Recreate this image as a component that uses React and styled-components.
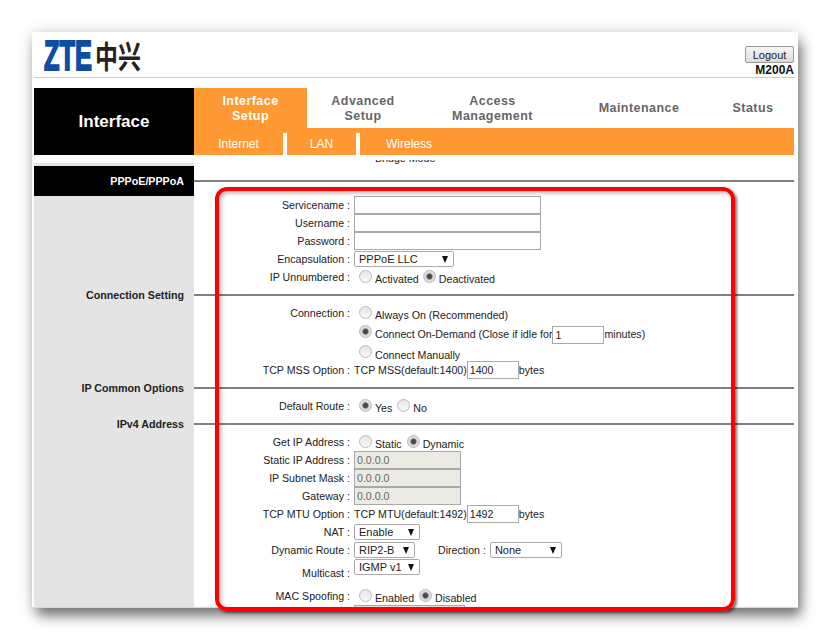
import styled, { createGlobalStyle } from 'styled-components';

const GlobalStyle = createGlobalStyle`
  html, body { margin: 0; padding: 0; background: #fff; }
  body { width: 830px; height: 641px; overflow: hidden; font-family: "Liberation Sans", Arial, sans-serif; }
`;

const Page = styled.div`
  position: relative;
  width: 830px;
  height: 641px;
  padding: 32px 32px 33px 32px;
  box-sizing: border-box;
  overflow: hidden;
`;

const Window = styled.div`
  width: 766px;
  height: 576px;
  box-sizing: border-box;
  padding: 0 4px 2px 2px;
  background: #fff;
  border-bottom: 1px solid #cfd8de;
  box-shadow: 0 0 14px rgba(0, 0, 0, 0.16), 4px 9px 12px -1px rgba(0, 0, 0, 0.5);
  overflow: hidden;
  font-size: 10.65px;
  color: #222;
`;

const Header = styled.header`
  height: 46px;
  box-sizing: border-box;
  border-bottom: 1px solid #ccc;
  display: flex;
  justify-content: space-between;
`;

const Logo = styled.svg`
  width: 120px;
  height: 44px;
  margin-left: 8px;
  flex: none;
`;

const HeaderSide = styled.div`
  display: flex;
  flex-direction: column;
  align-items: flex-end;
  padding-top: 14px;
`;

const LogoutButton = styled.button`
  width: 49px;
  height: 18px;
  padding: 0;
  border: 1px solid #999;
  border-radius: 2px;
  background: linear-gradient(#f6f6f6, #dcdcdc);
  font: 11px "Liberation Sans", Arial, sans-serif;
  color: #222;
`;

const Model = styled.div`
  font-size: 12px;
  font-weight: bold;
  line-height: 14px;
  color: #111;
`;

const Nav = styled.nav`
  margin-top: 10px;
  height: 67px;
  display: grid;
  grid-template-columns: 160px 1fr;
`;

const NavTitle = styled.div`
  background: #000;
  color: #fff;
  font-size: 17px;
  font-weight: bold;
  display: flex;
  align-items: center;
  justify-content: center;
  padding-top: 1px;
`;

const NavRight = styled.div`
  display: flex;
  flex-direction: column;
`;

const Tabs = styled.div`
  height: 40px;
  display: grid;
  grid-template-columns: 113px 112px 147px 146px 82px;
`;

const Tab = styled.div`
  background: ${p => (p.$active ? '#ff9933' : '#fff')};
  color: ${p => (p.$active ? '#fff' : '#666')};
  font-size: 12.5px;
  font-weight: bold;
  line-height: 15px;
  letter-spacing: 0.45px;
  text-align: center;
  display: flex;
  align-items: center;
  justify-content: center;
  padding-top: 1px;
  box-sizing: border-box;
`;

const SubBar = styled.div`
  height: 27px;
  background: #ff9933;
  display: flex;
  align-items: stretch;
`;

const SubItem = styled.div`
  width: ${p => p.$w}px;
  box-sizing: border-box;
  margin-top: 5px;
  border-right: ${p => (p.$sep ? '4px solid #fff' : 'none')};
  color: #fff;
  font-size: 12px;
  display: flex;
  align-items: center;
  justify-content: center;
`;

const CutRow = styled.div`
  height: 11px;
  display: grid;
  grid-template-columns: 160px 1fr;
`;

const CutSide = styled.div`
  margin-top: 8px;
  background: #e4e4e4;
`;

const CutText = styled.div`
  margin: 5px 0 0 181px;
  height: 5px;
  overflow: hidden;
  display: flex;
  align-items: flex-end;
  white-space: nowrap;
  line-height: 13px;
`;

const Head = styled.div`
  display: grid;
  grid-template-columns: 160px 1fr;
  height: ${p => p.$h || 18}px;
`;

const HeadTitle = styled.div`
  background: ${p => (p.$dark ? '#000' : '#e4e4e4')};
  color: ${p => (p.$dark ? '#fff' : '#222')};
  font-size: 10.7px;
  font-weight: bold;
  display: flex;
  align-items: center;
  justify-content: flex-end;
  padding-right: 10px;
`;

const HeadLine = styled.div`
  display: flex;
  align-items: center;
  &::before {
    content: '';
    flex: 1;
    height: 2px;
    background: #808080;
  }
`;

const Section = styled.section`
  display: grid;
  grid-template-columns: 160px 1fr;
`;

const Side = styled.div`
  background: #e4e4e4;
`;

const Rows = styled.div`
  display: flex;
  flex-direction: column;
`;

const Row = styled.div`
  display: flex;
  height: ${p => p.$h || 18}px;
  align-items: ${p => p.$align || 'center'};
  margin-top: ${p => p.$top || 0}px;
`;

const Label = styled.label`
  width: 160px;
  flex: none;
  text-align: right;
  padding-right: 4px;
  box-sizing: border-box;
  white-space: nowrap;
  position: relative;
  top: ${p => p.$shift || 0}px;
`;

const Value = styled.div`
  display: flex;
  align-items: center;
  white-space: nowrap;
  height: 100%;
`;

const TextInput = styled.input`
  width: ${p => p.$w}px;
  height: 18px;
  margin: 0;
  padding: 0 2px;
  box-sizing: border-box;
  border: 1px solid #a9a9a9;
  border-radius: 0;
  background: ${p => (p.disabled ? '#ebebe4' : '#fff')};
  font: 10.65px "Liberation Sans", Arial, sans-serif;
  color: ${p => (p.disabled ? '#666' : '#222')};
  outline: none;
  position: relative;
  top: ${p => p.$shift || 0}px;
`;

const SelectBox = styled.div`
  width: ${p => p.$w}px;
  height: 16px;
  box-sizing: border-box;
  border: 1px solid #a9a9a9;
  border-radius: 2px;
  padding: 0 5px 0 4px;
  display: flex;
  align-items: center;
  justify-content: space-between;
  background: #fff;
  font-size: 11px;
  margin-top: ${p => p.$top || 0}px;
  &::after {
    content: '';
    border-left: 3.5px solid transparent;
    border-right: 3.5px solid transparent;
    border-top: 7px solid #111;
  }
`;

const Radio = styled.input.attrs({ type: 'radio' })`
  appearance: none;
  width: 13px;
  height: 13px;
  margin: 0 3px 0 5px;
  border: 1px solid #bbb;
  border-radius: 50%;
  background: ${p =>
    p.checked
      ? 'radial-gradient(circle, #444 0, #555 2.5px, #d8d8d8 3.5px, #e8e8e8 100%)'
      : 'linear-gradient(#e6e6e6, #f8f8f8)'};
  position: relative;
  top: -1px;
  flex: none;
`;

const OptionText = styled.span`
  position: relative;
  top: ${p => p.$shift ?? 2}px;
  margin-right: ${p => p.$gap || 0}px;
`;

const Spaced = styled.span`
  margin-left: ${p => p.$left || 0}px;
  margin-right: ${p => p.$right || 0}px;
  position: relative;
  top: ${p => p.$shift || 0}px;
`;

const Highlight = styled.div`
  position: absolute;
  left: 215px;
  top: 187px;
  width: 520px;
  height: 424px;
  box-sizing: border-box;
  border: 4px solid #f00;
  border-radius: 12px;
  box-shadow: 2px 2px 3px rgba(0, 0, 0, 0.55), inset 2px 2px 4px rgba(0, 0, 0, 0.3);
`;

function Choice({ label, checked, gap, shift }) {
  return (
    <>
      <Radio checked={!!checked} readOnly />
      <OptionText $gap={gap} $shift={shift}>{label}</OptionText>
    </>
  );
}

export default function App() {
  return (
    <Page>
      <GlobalStyle />
      <Window>
        <Header>
          <Logo viewBox="0 0 120 44">
            <text transform="translate(2 38) scale(0.59 1)" fontFamily="Liberation Sans" fontWeight="bold" fontSize="43" fill="#0b4ea2" stroke="#0b4ea2" strokeWidth="2">ZTE</text>
            <text transform="translate(53 36) scale(0.74 1)" fontFamily="Noto Sans CJK SC" fontWeight="bold" fontSize="31" fill="#2a1f1f">中兴</text>
          </Logo>
          <HeaderSide>
            <LogoutButton>Logout</LogoutButton>
            <Model>M200A</Model>
          </HeaderSide>
        </Header>

        <Nav>
          <NavTitle>Interface</NavTitle>
          <NavRight>
            <Tabs>
              <Tab $active>Interface<br />Setup</Tab>
              <Tab>Advanced<br />Setup</Tab>
              <Tab>Access<br />Management</Tab>
              <Tab>Maintenance</Tab>
              <Tab>Status</Tab>
            </Tabs>
            <SubBar>
              <SubItem $w={93} $sep>Internet</SubItem>
              <SubItem $w={73} $sep>LAN</SubItem>
              <SubItem $w={98}>Wireless</SubItem>
            </SubBar>
          </NavRight>
        </Nav>

        <CutRow>
          <CutSide />
          <CutText>Bridge Mode</CutText>
        </CutRow>

        <Head $h={30}>
          <HeadTitle $dark>PPPoE/PPPoA</HeadTitle>
          <HeadLine />
        </Head>
        <Section>
          <Side />
          <Rows>
            <Row><Label>Servicename :</Label><TextInput $w={187} /></Row>
            <Row><Label>Username :</Label><TextInput $w={187} /></Row>
            <Row><Label>Password :</Label><TextInput $w={187} type="password" /></Row>
            <Row><Label>Encapsulation :</Label><SelectBox $w={100}>PPPoE LLC</SelectBox></Row>
            <Row>
              <Label>IP Unnumbered :</Label>
              <Value><Choice label="Activated" gap={-1} /><Choice label="Deactivated" checked /></Value>
            </Row>
          </Rows>
        </Section>

        <Head>
          <HeadTitle>Connection Setting</HeadTitle>
          <HeadLine />
        </Head>
        <Section>
          <Side />
          <Rows>
            <Row><Label>Connection :</Label><Value><Choice label="Always On (Recommended)" /></Value></Row>
            <Row $h={21}>
              <Label />
              <Value>
                <Choice label="Connect On-Demand (Close if idle for" checked shift={1} />
                <TextInput $w={52} $shift={2} defaultValue="1" />
                <Spaced $shift={1}>minutes)</Spaced>
              </Value>
            </Row>
            <Row $h={18}><Label /><Value><Choice label="Connect Manually" shift={3} /></Value></Row>
            <Row>
              <Label>TCP MSS Option :</Label>
              <Value>TCP MSS(default:1400)<TextInput $w={52} defaultValue="1400" />bytes</Value>
            </Row>
          </Rows>
        </Section>

        <Head>
          <HeadTitle>IP Common Options</HeadTitle>
          <HeadLine />
        </Head>
        <Section>
          <Side />
          <Rows>
            <Row><Label>Default Route :</Label><Value><Choice label="Yes" checked /><Choice label="No" /></Value></Row>
          </Rows>
        </Section>

        <Head>
          <HeadTitle>IPv4 Address</HeadTitle>
          <HeadLine />
        </Head>
        <Section>
          <Side />
          <Rows>
            <Row><Label>Get IP Address :</Label><Value><Choice label="Static" /><Choice label="Dynamic" checked /></Value></Row>
            <Row><Label>Static IP Address :</Label><TextInput $w={107} disabled defaultValue="0.0.0.0" /></Row>
            <Row><Label>IP Subnet Mask :</Label><TextInput $w={107} disabled defaultValue="0.0.0.0" /></Row>
            <Row><Label>Gateway :</Label><TextInput $w={107} disabled defaultValue="0.0.0.0" /></Row>
            <Row>
              <Label>TCP MTU Option :</Label>
              <Value>TCP MTU(default:1492)<TextInput $w={52} defaultValue="1492" />bytes</Value>
            </Row>
            <Row><Label>NAT :</Label><SelectBox $w={66}>Enable</SelectBox></Row>
            <Row>
              <Label>Dynamic Route :</Label>
              <SelectBox $w={61}>RIP2-B</SelectBox>
              <Spaced $left={23} $right={4}>Direction :</Spaced>
              <SelectBox $w={72}>None</SelectBox>
            </Row>
            <Row>
              <Label $shift={5}>Multicast :</Label>
              <SelectBox $w={66} $top={-2}>IGMP v1</SelectBox>
            </Row>
            <Row $top={10}>
              <Label>MAC Spoofing :</Label>
              <Value><Choice label="Enabled" /><Choice label="Disabled" checked /></Value>
            </Row>
            <Row><Label /><TextInput $w={111} disabled /></Row>
          </Rows>
        </Section>
      </Window>
      <Highlight />
    </Page>
  );
}
